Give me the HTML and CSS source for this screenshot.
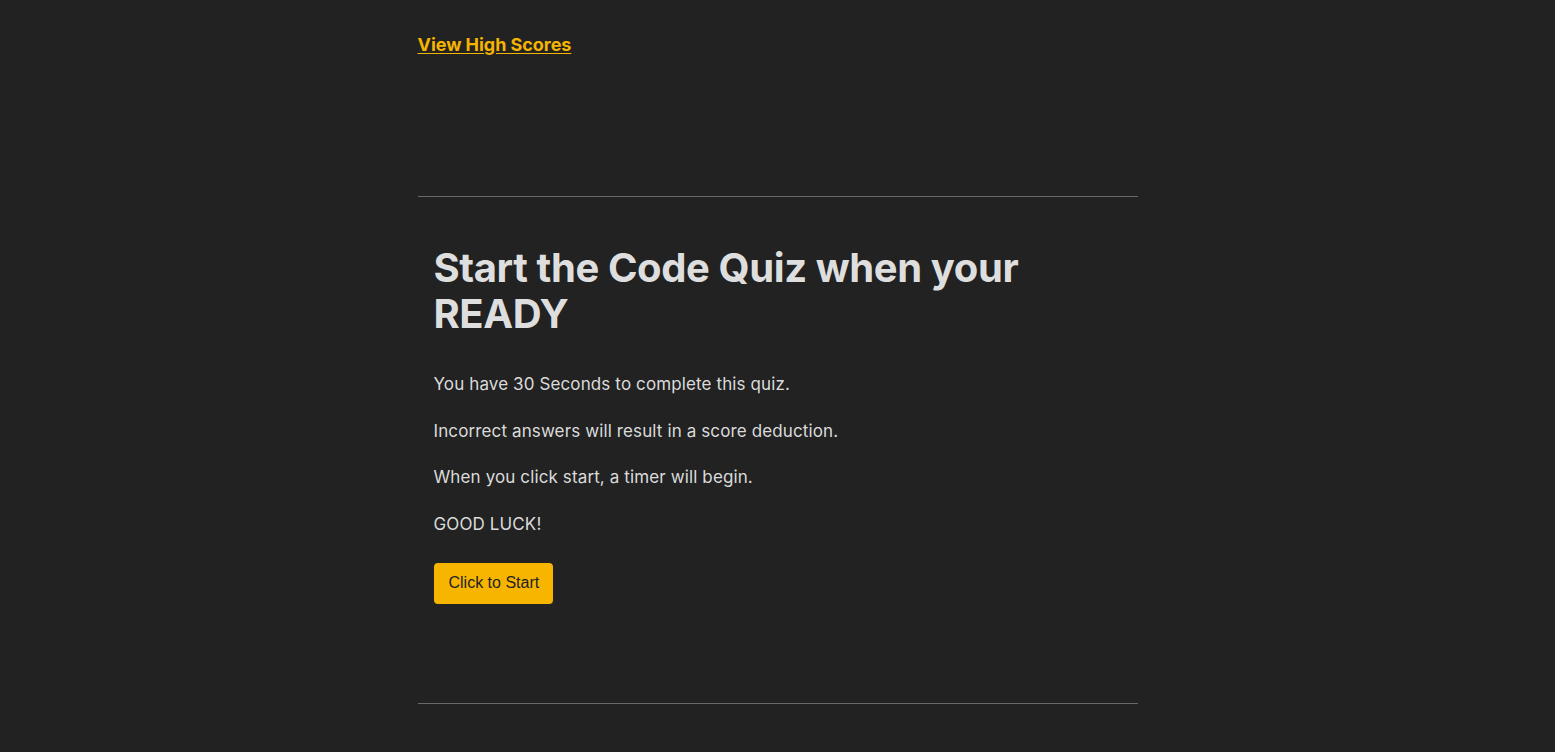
FILE: index.html
```html
<!DOCTYPE html>
<html lang="en">
<head>
<meta charset="utf-8">
<title>Code Quiz</title>
<link rel="stylesheet" href="styles.css">
</head>
<body>
<div class="page">
  <header class="top">
    <a class="scores" href="#">View High Scores</a>
  </header>
  <hr class="rule rule-top">
  <section class="intro">
    <h1 class="title">Start the Code Quiz when your READY</h1>
    <p class="line line-first">You have 30 Seconds to complete this quiz.</p>
    <p class="line">Incorrect answers will result in a score deduction.</p>
    <p class="line">When you click start, a timer will begin.</p>
    <p class="line">GOOD LUCK!</p>
    <button class="start" type="button">Click to Start</button>
  </section>
  <hr class="rule rule-bottom">
</div>
</body>
</html>
```
FILE: styles.css
```css
html, body {
  margin: 0;
  padding: 0;
  background: #222222;
}
body {
  font-family: Inter, "Noto Sans", sans-serif;
  color: #dbdbdb;
}
.page {
  width: 720px;
  margin: 0 auto;
}
.top {
  padding-top: 33px;
  height: 23px;
}
.scores {
  font-size: 18px;
  line-height: 24px;
  font-weight: 700;
  letter-spacing: -0.05px;
  color: #f5b400;
  text-decoration: underline;
  text-underline-offset: 2px;
}
.rule {
  border: 0;
  border-top: 1px solid #6a6a6a;
  margin: 0;
}
.rule-top {
  margin-top: 140px;
}
.intro {
  padding: 0 16px;
}
.title {
  margin: 48px 0 0;
  font-size: 40px;
  line-height: 46px;
  font-weight: 700;
  letter-spacing: -0.4px;
  color: #dedede;
  width: 620px;
}
.line {
  margin: 18.5px 0 0;
  font-size: 17px;
  line-height: 28px;
  letter-spacing: 0.12px;
}
.line-first {
  margin-top: 33px;
}
.start {
  display: block;
  margin-top: 25px;
  margin-bottom: 99px;
  height: 41px;
  padding: 0 14px 0 15px;
  border: 0;
  border-radius: 4px;
  background: #f7b500;
  color: #222222;
  font-family: "Liberation Sans", Arial, sans-serif;
  font-size: 16px;
}
```
